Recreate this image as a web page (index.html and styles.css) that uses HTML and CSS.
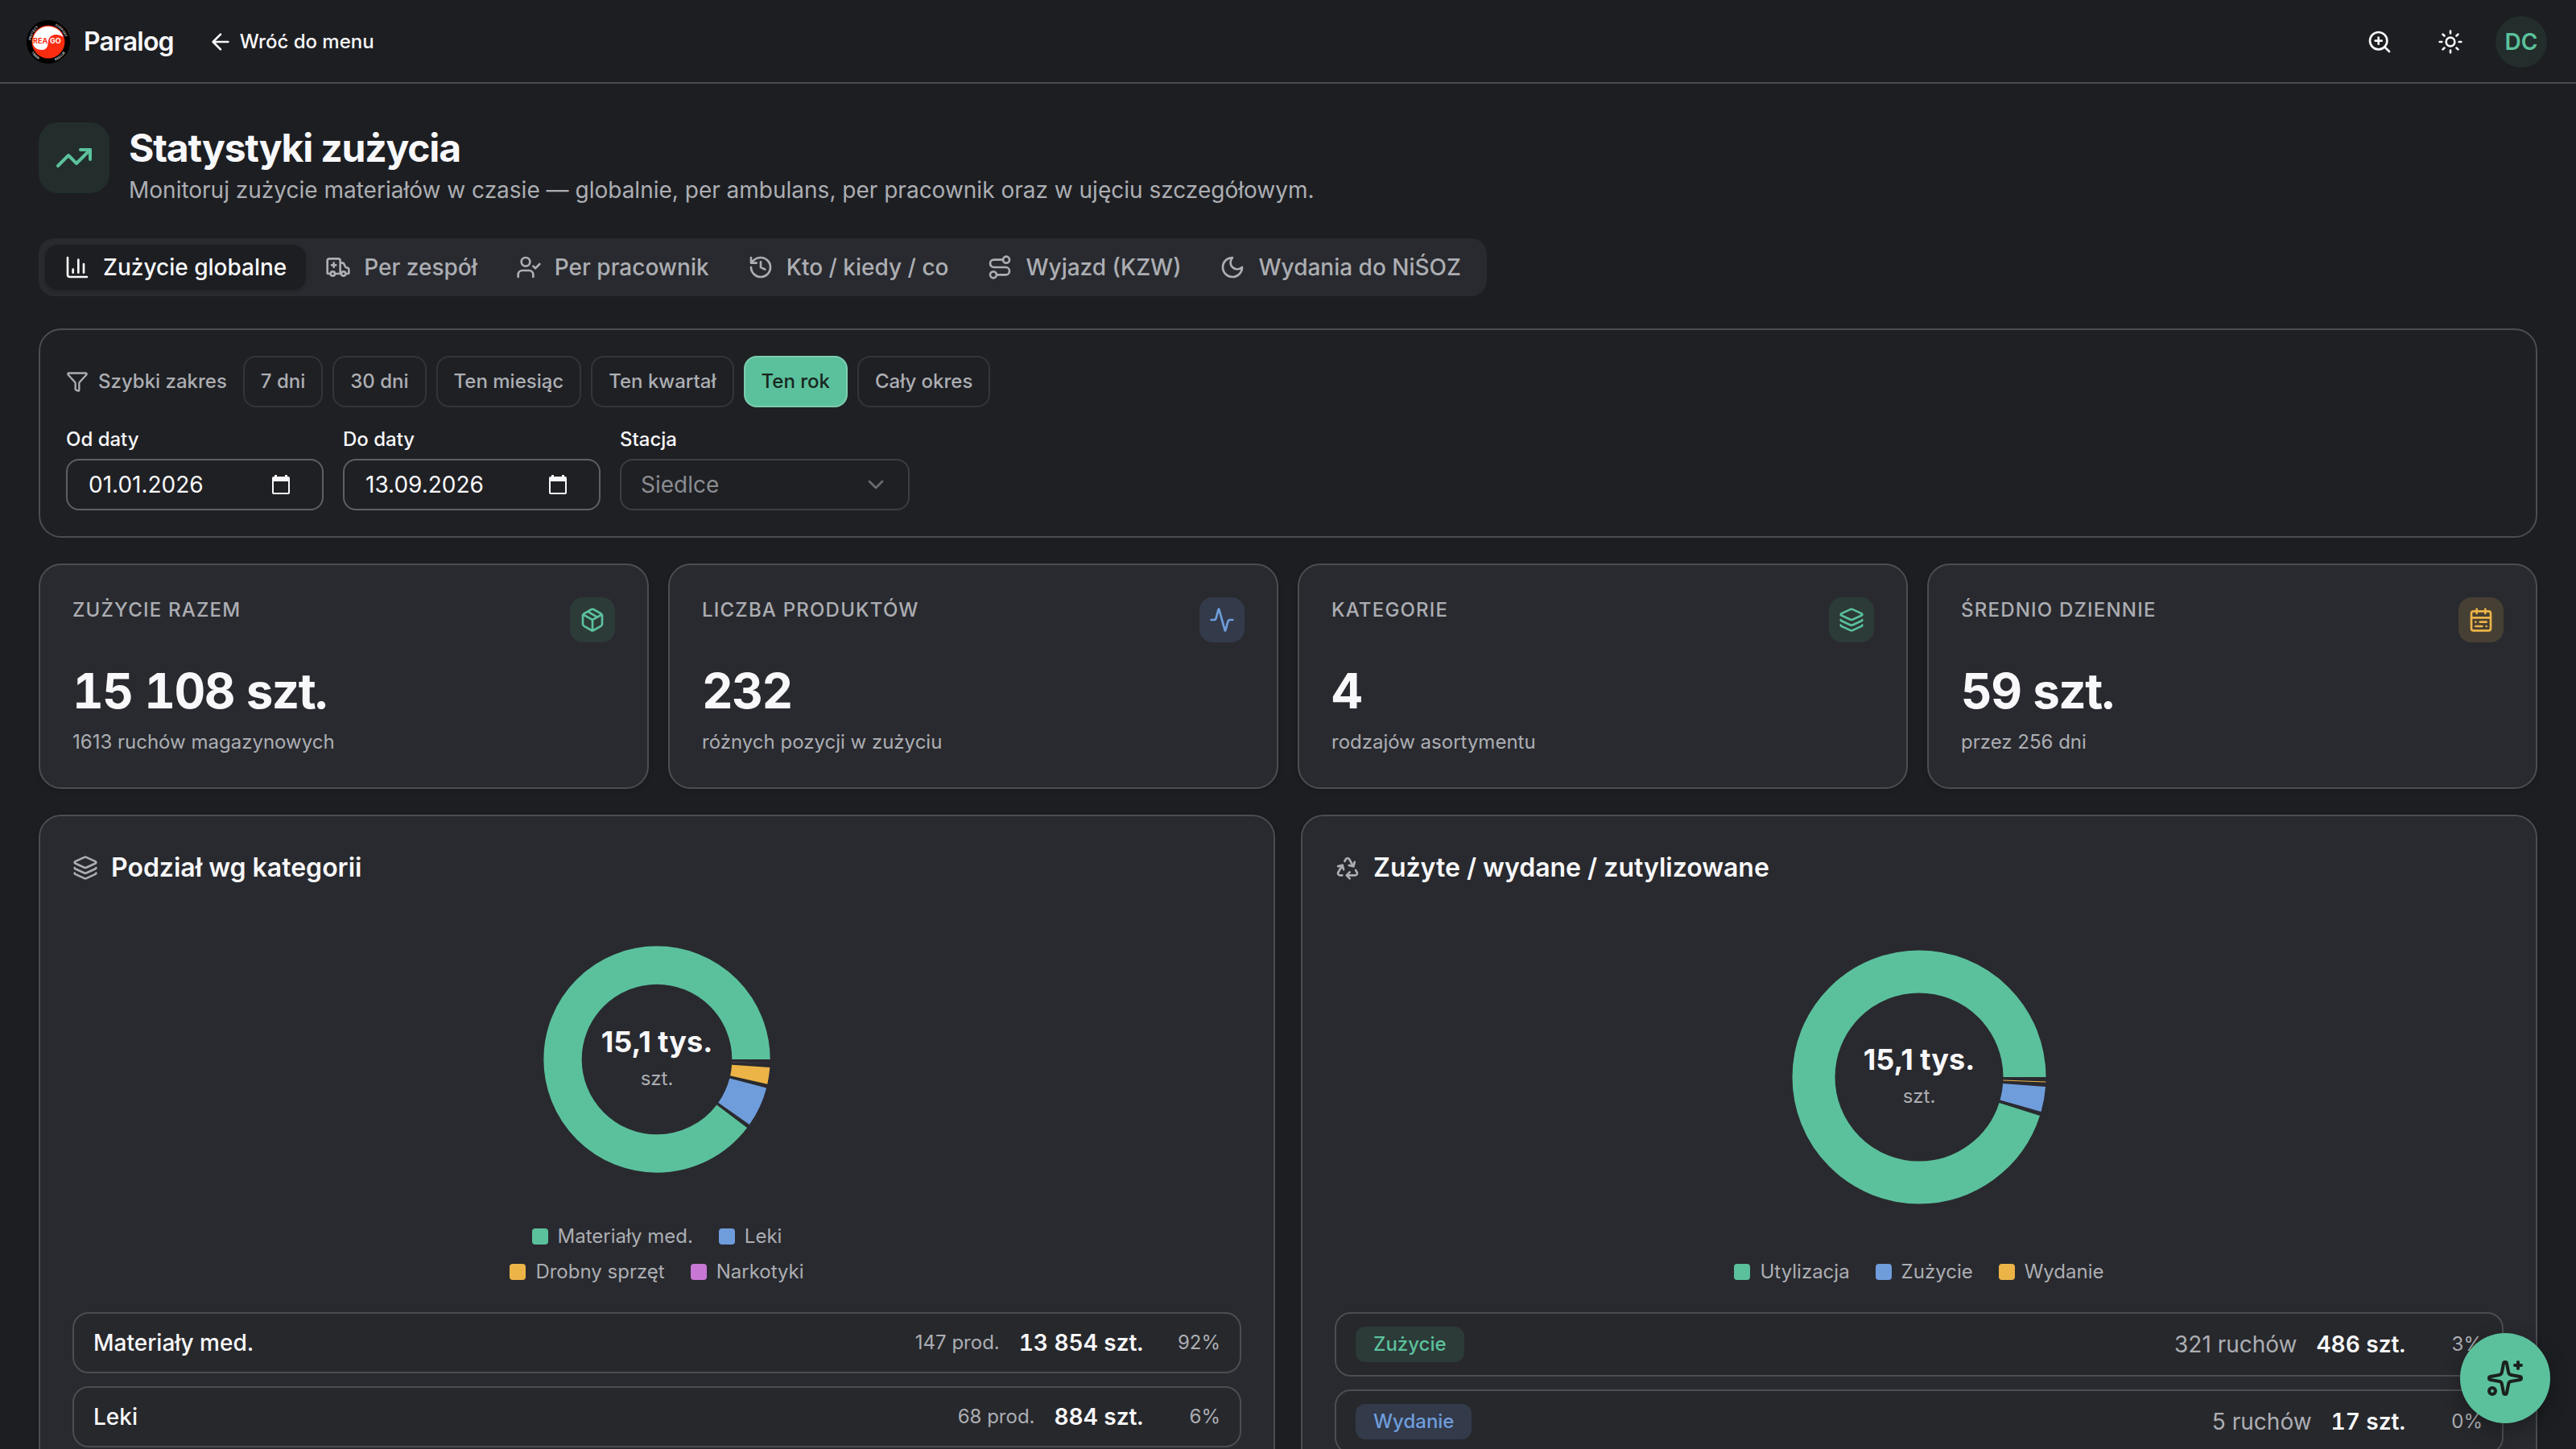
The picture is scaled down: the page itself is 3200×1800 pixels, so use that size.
FILE: index.html
```html
<!DOCTYPE html>
<html lang="pl">
<head>
<meta charset="utf-8">
<meta name="viewport" content="width=device-width, initial-scale=1">
<title>Paralog – Statystyki zużycia</title>
<link rel="stylesheet" href="styles.css">
</head>
<body>
<svg class="sprite" aria-hidden="true">
  <symbol id="i-layers" viewBox="0 0 24 24"><path d="M12.83 2.18a2 2 0 0 0-1.66 0L2.6 6.08a1 1 0 0 0 0 1.83l8.58 3.91a2 2 0 0 0 1.66 0l8.58-3.9a1 1 0 0 0 0-1.83z"/><path d="M2 12a1 1 0 0 0 .58.91l8.6 3.91a2 2 0 0 0 1.65 0l8.58-3.9A1 1 0 0 0 22 12"/><path d="M2 17a1 1 0 0 0 .58.91l8.6 3.91a2 2 0 0 0 1.65 0l8.58-3.9A1 1 0 0 0 22 17"/></symbol>
  <symbol id="i-date" viewBox="0 0 22 24"><path fill="currentColor" stroke="none" d="M3 0h3v2h10V0h3v2h1a2 2 0 0 1 2 2v18a2 2 0 0 1-2 2H2a2 2 0 0 1-2-2V4a2 2 0 0 1 2-2h1zM2 8v14h18V8z" fill-rule="evenodd"/></symbol>
</svg>
<div class="app">
  <header class="topbar">
    <a class="brand" href="#">
      <svg class="brand-logo" viewBox="0 0 56 56" aria-hidden="true">
        <defs>
          <path id="ring-top" d="M6.5 28a21.5 21.5 0 0 1 43 0"/>
          <path id="ring-bottom" d="M3 28a25 25 0 0 0 50 0"/>
        </defs>
        <circle cx="28" cy="28" r="27" fill="#000"/>
        <circle cx="28" cy="28" r="20.5" fill="#fb2c10"/>
        <path d="M8.5 28a19.5 19.5 0 0 1 38-6c-7-5-17-4-18.500 5c-.5 5-1 11-8 11c-7 0-11-4-11.500-10z" fill="#fff"/>
        <text class="logo-word" x="9" y="30" fill="#fb2c10">REA</text>
        <text class="logo-word" x="30" y="30" fill="#fff">GO</text>
        <text class="logo-ring"><textPath href="#ring-top" startOffset="2">PROTECT</textPath></text>
        <text class="logo-ring"><textPath href="#ring-top" startOffset="42">SUPPORT</textPath></text>
        <text class="logo-ring"><textPath href="#ring-bottom" startOffset="14">TRAIN</textPath></text>
        <text class="logo-ring"><textPath href="#ring-bottom" startOffset="48">RESCUE</textPath></text>
      </svg>
      <span>Paralog</span>
    </a>
    <a class="back" href="#">
      <svg class="icon" viewBox="0 0 24 24" aria-hidden="true"><path d="m12 19-7-7 7-7M19 12H5"/></svg>
      Wróć do menu
    </a>
    <div class="topbar-actions">
      <button class="icon-button" type="button" aria-label="Powiększ">
        <svg class="icon" viewBox="0 0 24 24" aria-hidden="true"><circle cx="11" cy="11" r="8"/><path d="m21 21-4.350-4.350M11 8v6M8 11h6"/></svg>
      </button>
      <button class="icon-button" type="button" aria-label="Motyw">
        <svg class="icon" viewBox="0 0 24 24" aria-hidden="true"><circle cx="12" cy="12" r="4"/><path d="M12 2v2M12 20v2M4.930 4.930l1.410 1.410M17.660 17.660l1.410 1.410M2 12h2M20 12h2M6.340 17.660l-1.410 1.410M19.070 4.930l-1.410 1.410"/></svg>
      </button>
      <button class="icon-button" type="button" aria-label="Konto"><span class="avatar">DC</span></button>
    </div>
  </header>

  <main class="page">
    <section class="hero">
      <span class="hero-icon"><svg class="icon icon-lg" viewBox="0 0 24 24" aria-hidden="true"><path d="M16 7h6v6"/><path d="m22 7-8.500 8.500-5-5L2 17"/></svg></span>
      <div>
        <h1>Statystyki zużycia</h1>
        <p>Monitoruj zużycie materiałów w czasie — globalnie, per ambulans, per pracownik oraz w ujęciu szczegółowym.</p>
      </div>
    </section>

    <div class="tabs" role="tablist">
      <button class="tab is-active" type="button" role="tab" aria-selected="true"><svg class="icon" viewBox="0 0 24 24" aria-hidden="true"><path d="M3 3v16a2 2 0 0 0 2 2h16M18 17V9M13 17V5M8 17v-3"/></svg>Zużycie globalne</button>
      <button class="tab" type="button" role="tab"><svg class="icon" viewBox="0 0 24 24" aria-hidden="true"><path d="M10 10H6M14 18V6a2 2 0 0 0-2-2H4a2 2 0 0 0-2 2v11a1 1 0 0 0 1 1h2M19 18h2a1 1 0 0 0 1-1v-3.280a1 1 0 0 0-.684-.948l-1.923-.641a1 1 0 0 1-.578-.502l-1.539-3.076A1 1 0 0 0 16.382 8H14M8 8v4M9 18h6"/><circle cx="17" cy="18" r="2"/><circle cx="7" cy="18" r="2"/></svg>Per zespół</button>
      <button class="tab" type="button" role="tab"><svg class="icon" viewBox="0 0 24 24" aria-hidden="true"><path d="m16 11 2 2 4-4M16 21v-2a4 4 0 0 0-4-4H6a4 4 0 0 0-4 4v2"/><circle cx="9" cy="7" r="4"/></svg>Per pracownik</button>
      <button class="tab" type="button" role="tab"><svg class="icon" viewBox="0 0 24 24" aria-hidden="true"><path d="M3 12a9 9 0 1 0 9-9 9.750 9.750 0 0 0-6.740 2.740L3 8M3 3v5h5M12 7v5l4 2"/></svg>Kto / kiedy / co</button>
      <button class="tab" type="button" role="tab"><svg class="icon" viewBox="0 0 24 24" aria-hidden="true"><circle cx="6" cy="19" r="3"/><path d="M9 19h8.500a3.500 3.500 0 0 0 0-7h-11a3.500 3.500 0 0 1 0-7H15"/><circle cx="18" cy="5" r="3"/></svg>Wyjazd (KZW)</button>
      <button class="tab" type="button" role="tab"><svg class="icon" viewBox="0 0 24 24" aria-hidden="true"><path d="M12 3a6 6 0 0 0 9 9 9 9 0 1 1-9-9Z"/></svg>Wydania do NiŚOZ</button>
    </div>

    <section class="filters">
      <div class="ranges">
        <span class="ranges-label"><svg class="icon icon-sm" viewBox="0 0 24 24" aria-hidden="true"><path d="M10 20a1 1 0 0 0 .553.895l2 1A1 1 0 0 0 14 21v-7a2 2 0 0 1 .517-1.341L21.740 4.670A1 1 0 0 0 21 3H3a1 1 0 0 0-.742 1.670l7.225 7.989A2 2 0 0 1 10 14z"/></svg>Szybki zakres</span>
        <button class="range" type="button">7 dni</button>
        <button class="range" type="button">30 dni</button>
        <button class="range" type="button">Ten miesiąc</button>
        <button class="range" type="button">Ten kwartał</button>
        <button class="range is-active" type="button">Ten rok</button>
        <button class="range" type="button">Cały okres</button>
      </div>
      <div class="fields">
        <div class="field">
          <label for="from">Od daty</label>
          <div class="control">
            <input id="from" type="text" value="01.01.2026">
            <button type="button" aria-label="Wybierz datę początkową"><svg class="date-icon" aria-hidden="true"><use href="#i-date"/></svg></button>
          </div>
        </div>
        <div class="field">
          <label for="to">Do daty</label>
          <div class="control">
            <input id="to" type="text" value="13.09.2026">
            <button type="button" aria-label="Wybierz datę końcową"><svg class="date-icon" aria-hidden="true"><use href="#i-date"/></svg></button>
          </div>
        </div>
        <div class="field field-wide">
          <label for="station">Stacja</label>
          <div class="picker">
            <select id="station" disabled><option>Siedlce</option></select>
            <svg class="icon" viewBox="0 0 24 24" aria-hidden="true"><path d="m6 9 6 6 6-6"/></svg>
          </div>
        </div>
      </div>
    </section>

    <section class="kpis">
      <article class="kpi">
        <div class="kpi-head"><h2>Zużycie razem</h2><span class="kpi-icon tone-green"><svg class="icon" viewBox="0 0 24 24" aria-hidden="true"><path d="M11 21.730a2 2 0 0 0 2 0l7-4A2 2 0 0 0 21 16V8a2 2 0 0 0-1-1.730l-7-4a2 2 0 0 0-2 0l-7 4A2 2 0 0 0 3 8v8a2 2 0 0 0 1 1.730zM12 22V12M3.290 7 12 12l8.710-5M7.500 4.270l9 5.150"/></svg></span></div>
        <p class="kpi-value">15 108 szt.</p>
        <p class="kpi-note">1613 ruchów magazynowych</p>
      </article>
      <article class="kpi">
        <div class="kpi-head"><h2>Liczba produktów</h2><span class="kpi-icon tone-blue"><svg class="icon" viewBox="0 0 24 24" aria-hidden="true"><path d="M22 12h-2.480a2 2 0 0 0-1.930 1.460l-2.350 8.360a.25.25 0 0 1-.48 0L9.240 2.180a.25.25 0 0 0-.48 0l-2.350 8.360A2 2 0 0 1 4.490 12H2"/></svg></span></div>
        <p class="kpi-value">232</p>
        <p class="kpi-note">różnych pozycji w zużyciu</p>
      </article>
      <article class="kpi">
        <div class="kpi-head"><h2>Kategorie</h2><span class="kpi-icon tone-green"><svg class="icon" aria-hidden="true"><use href="#i-layers"/></svg></span></div>
        <p class="kpi-value">4</p>
        <p class="kpi-note">rodzajów asortymentu</p>
      </article>
      <article class="kpi">
        <div class="kpi-head"><h2>Średnio dziennie</h2><span class="kpi-icon tone-amber"><svg class="icon" viewBox="0 0 24 24" aria-hidden="true"><rect x="3" y="4" width="18" height="18" rx="2"/><path d="M16 2v4M3 10h18M8 2v4M17 14h-6M13 18H7M7 14h.010M17 18h.010"/></svg></span></div>
        <p class="kpi-value">59 szt.</p>
        <p class="kpi-note">przez 256 dni</p>
      </article>
    </section>

    <section class="panels">
      <article class="panel">
        <h2><svg class="icon" aria-hidden="true"><use href="#i-layers"/></svg>Podział wg kategorii</h2>
        <div class="chart">
          <div class="plot">
            <svg class="donut" viewBox="0 0 412 412" role="img" aria-label="Podział zużycia wg kategorii">
              <circle class="stroke-green" pathLength="360" cx="206" cy="206" r="131" stroke-dasharray="322.800 37.200" stroke-dashoffset="-37.200"/>
              <circle class="stroke-blue" pathLength="360" cx="206" cy="206" r="131" stroke-dasharray="20.600 339.400" stroke-dashoffset="-14.600"/>
              <circle class="stroke-amber" pathLength="360" cx="206" cy="206" r="131" stroke-dasharray="8.500 351.500" stroke-dashoffset="-4.100"/>
              <circle class="stroke-violet" pathLength="360" cx="206" cy="206" r="131" stroke-dasharray=".1 359.900" stroke-dashoffset="-2"/>
            </svg>
            <p class="total"><strong>15,1 tys.</strong><span>szt.</span></p>
          </div>
          <ul class="legend legend-narrow">
            <li><i class="fill-green"></i>Materiały med.</li>
            <li><i class="fill-blue"></i>Leki</li>
            <li><i class="fill-amber"></i>Drobny sprzęt</li>
            <li><i class="fill-violet"></i>Narkotyki</li>
          </ul>
        </div>
        <ul class="rows">
          <li><span class="name">Materiały med.</span><span class="count">147 prod.</span><strong>13 854 szt.</strong><span class="share">92%</span></li>
          <li><span class="name">Leki</span><span class="count">68 prod.</span><strong>884 szt.</strong><span class="share">6%</span></li>
        </ul>
      </article>

      <article class="panel">
        <h2><svg class="icon" viewBox="0 0 24 24" aria-hidden="true"><path d="M7 19H4.815a1.830 1.830 0 0 1-1.570-.881 1.785 1.785 0 0 1-.004-1.784L7.196 9.500M11 19h8.203a1.830 1.830 0 0 0 1.556-.89 1.784 1.784 0 0 0 0-1.775l-1.226-2.120M14 16l-3 3 3 3M8.293 13.596 7.196 9.500 3.100 10.598M9.344 5.811l1.093-1.892A1.830 1.830 0 0 1 11.985 3a1.784 1.784 0 0 1 1.546.888l3.943 6.843M13.378 9.633l4.096 1.098 1.097-4.096"/></svg>Zużyte / wydane / zutylizowane</h2>
        <div class="chart">
          <div class="plot">
            <svg class="donut" viewBox="0 0 412 412" role="img" aria-label="Zużyte, wydane i zutylizowane">
              <circle class="stroke-green" pathLength="360" cx="206" cy="206" r="131" stroke-dasharray="342.200 17.800" stroke-dashoffset="-17.800"/>
              <circle class="stroke-blue" pathLength="360" cx="206" cy="206" r="131" stroke-dasharray="11.400 348.600" stroke-dashoffset="-4.400"/>
              <circle class="stroke-amber" pathLength="360" cx="206" cy="206" r="131" stroke-dasharray=".4 359.600" stroke-dashoffset="-2"/>
            </svg>
            <p class="total"><strong>15,1 tys.</strong><span>szt.</span></p>
          </div>
          <ul class="legend">
            <li><i class="fill-green"></i>Utylizacja</li>
            <li><i class="fill-blue"></i>Zużycie</li>
            <li><i class="fill-amber"></i>Wydanie</li>
          </ul>
        </div>
        <ul class="rows rows-badged">
          <li><span class="name"><span class="badge tone-green">Zużycie</span></span><span class="count">321 ruchów</span><strong>486 szt.</strong><span class="share">3%</span></li>
          <li><span class="name"><span class="badge tone-blue">Wydanie</span></span><span class="count">5 ruchów</span><strong>17 szt.</strong><span class="share">0%</span></li>
        </ul>
      </article>
    </section>
  </main>

  <button class="assistant" type="button" aria-label="Asystent">
    <svg class="icon icon-lg" viewBox="0 0 24 24" aria-hidden="true"><path d="M11.017 2.814a1 1 0 0 1 1.966 0l1.051 5.558a2 2 0 0 0 1.594 1.594l5.558 1.051a1 1 0 0 1 0 1.966l-5.558 1.051a2 2 0 0 0-1.594 1.594l-1.051 5.558a1 1 0 0 1-1.966 0l-1.051-5.558a2 2 0 0 0-1.594-1.594l-5.558-1.051a1 1 0 0 1 0-1.966l5.558-1.051a2 2 0 0 0 1.594-1.594zM20 2v4M22 4h-4"/><circle cx="4" cy="20" r="2"/></svg>
  </button>
</div>
</body>
</html>
```
FILE: styles.css
```css
:root {
  --bg: #1d1e22;
  --surface: #292a2f;
  --surface-row: #27282c;
  --surface-filter: #1f2024;
  --line: #4b4d52;
  --line-soft: #333539;
  --text: #f8f8fa;
  --muted: #acaeb3;
  --green: #5bc19c;
  --blue: #6f9ddc;
  --amber: #ecb447;
  --violet: #c678d4;
}

* { box-sizing: border-box; }

body {
  margin: 0;
  background: var(--bg);
  color: var(--text);
  font-family: Inter, "Liberation Sans", sans-serif;
  font-size: 28px;
  line-height: 40px;
}

h1, h2, p, ul { margin: 0; padding: 0; }
ul { list-style: none; }
a { color: inherit; text-decoration: none; }
button, input, select { font: inherit; color: inherit; margin: 0; }
button { cursor: pointer; }

.sprite { display: none; }

.app {
  height: 100vh;
  overflow: hidden auto;
  scrollbar-width: none;
}

.icon {
  width: 32px;
  height: 32px;
  flex: none;
  fill: none;
  stroke: currentColor;
  stroke-width: 2;
  stroke-linecap: round;
  stroke-linejoin: round;
}
.icon-sm { width: 28px; height: 28px; }
.icon-lg { width: 48px; height: 48px; }

/* Top bar */
.topbar {
  display: flex;
  align-items: center;
  height: 104px;
  padding: 0 32px;
  box-shadow: inset 0 -2px var(--line);
}
.brand {
  display: flex;
  align-items: center;
  gap: 16px;
  font-size: 32px;
  font-weight: 600;
  letter-spacing: -0.025em;
}
.brand-logo { width: 56px; height: 56px; }
.logo-word { font-size: 9px; font-weight: 700; letter-spacing: 0; }
.logo-ring { font-size: 4px; font-weight: 600; letter-spacing: 0; fill: #ddd; }
.back {
  display: flex;
  align-items: center;
  gap: 8px;
  margin-left: 42px;
  font-size: 24px;
  font-weight: 500;
}
.topbar-actions { display: flex; gap: 16px; margin-left: auto; }
.icon-button {
  display: grid;
  place-items: center;
  width: 72px;
  height: 72px;
  padding: 0;
  border: 0;
  background: none;
}
.avatar {
  display: grid;
  place-items: center;
  width: 64px;
  height: 64px;
  border-radius: 50%;
  background: #222d2c;
  color: var(--green);
  font-weight: 600;
}

/* Page */
.page { padding: 48px; }

.hero { display: flex; align-items: flex-start; gap: 24px; }
.hero-icon {
  display: grid;
  place-items: center;
  width: 88px;
  height: 88px;
  border-radius: 24px;
  background: #222d2c;
  color: var(--green);
}
.hero h1 {
  font-size: 48px;
  line-height: 64px;
  font-weight: 700;
  letter-spacing: -0.025em;
}
.hero p { color: var(--muted); }

.tabs {
  display: flex;
  width: fit-content;
  margin-top: 40px;
  padding: 8px;
  border-radius: 20px;
  background: var(--surface);
}
.tab {
  display: flex;
  align-items: center;
  gap: 16px;
  height: 56px;
  padding: 0 24px;
  border: 0;
  border-radius: 16px;
  background: none;
  color: var(--muted);
  font-weight: 500;
}
.tab.is-active {
  background: var(--bg);
  color: var(--text);
  box-shadow: 0 2px 4px rgb(0 0 0 / 0.2);
}

/* Filters */
.filters {
  display: grid;
  gap: 24px;
  margin-top: 40px;
  padding: 32px;
  border: 2px solid var(--line);
  border-radius: 28px;
  background: var(--surface-filter);
}
.ranges { display: flex; align-items: center; gap: 12px; font-size: 24px; }
.ranges-label {
  display: flex;
  align-items: center;
  gap: 12px;
  margin-right: 8px;
  color: var(--muted);
  font-weight: 500;
}
.range {
  height: 64px;
  padding: 0 20px;
  border: 2px solid var(--line-soft);
  border-radius: 16px;
  background: none;
  color: var(--muted);
  font-weight: 500;
}
.range.is-active {
  border-color: #7ccdb0;
  background: var(--green);
  color: #18261f;
}
.fields { display: flex; gap: 24px; }
.field {
  display: grid;
  grid-template-columns: minmax(0, 1fr);
  gap: 8px;
  width: 320px;
}
.field-wide { width: 360px; }
.field label { font-size: 24px; line-height: 32px; font-weight: 500; }
.control {
  display: flex;
  align-items: center;
  height: 64px;
  padding: 0 24px;
  border: 2px solid #5b6165;
  border-radius: 16px;
}
.control input {
  flex: 1;
  min-width: 0;
  padding: 0 2px;
  border: 0;
  background: none;
  outline: 0;
}
.control button {
  display: grid;
  place-items: center;
  width: 54px;
  padding: 0;
  border: 0;
  background: none;
}
.date-icon { width: 22px; height: 24px; }
.picker {
  display: grid;
  align-items: center;
  height: 64px;
  border: 2px solid #3c3e42;
  border-radius: 16px;
  color: #8a8c90;
}
.picker select, .picker .icon { grid-area: 1 / 1; }
.picker select {
  appearance: none;
  width: 100%;
  height: 60px;
  padding: 0 24px;
  border: 0;
  background: none;
  opacity: 1;
}
.picker .icon { justify-self: end; margin-right: 24px; opacity: 0.7; pointer-events: none; }

/* Summary cards */
.kpis {
  display: grid;
  grid-template-columns: repeat(4, 1fr);
  gap: 24px;
  margin-top: 32px;
}
.kpi, .panel {
  padding: 40px;
  border: 2px solid var(--line);
  border-radius: 28px;
  background: var(--surface);
  box-shadow: 0 2px 6px rgb(0 0 0 / 0.15);
}
.kpi-head { display: flex; justify-content: space-between; }
.kpi h2 {
  color: var(--muted);
  font-size: 24px;
  line-height: 32px;
  font-weight: 500;
  letter-spacing: 0.05em;
  text-transform: uppercase;
}
.kpi-icon {
  display: grid;
  place-items: center;
  width: 56px;
  height: 56px;
  border-radius: 16px;
}
.kpi-value {
  margin-top: 24px;
  font-size: 60px;
  line-height: 72px;
  font-weight: 700;
  font-variant-numeric: tabular-nums;
  letter-spacing: -0.025em;
}
.kpi-note {
  margin-top: 12px;
  color: var(--muted);
  font-size: 24px;
  line-height: 32px;
}
.tone-green { background: #2c3a38; color: var(--green); }
.tone-blue { background: #333a4a; color: var(--blue); }
.tone-amber { background: #463f33; color: var(--amber); }

/* Chart panels */
.panels {
  display: grid;
  grid-template-columns: repeat(2, 1fr);
  gap: 32px;
  margin-top: 32px;
}
.panel h2 {
  display: flex;
  align-items: center;
  gap: 16px;
  font-size: 32px;
  line-height: 48px;
  font-weight: 600;
}
.panel h2 .icon { color: var(--muted); }
.chart {
  display: flex;
  flex-direction: column;
  gap: 20px;
  height: 464px;
  margin-top: 30px;
}
.plot {
  flex: 1;
  min-height: 0;
  display: grid;
  grid-template-rows: 100%;
  place-items: center;
}
.donut, .total { grid-area: 1 / 1; }
.donut { height: 100%; fill: none; stroke-width: 53; }
.total {
  display: grid;
  gap: 12px;
  text-align: center;
  color: var(--muted);
  font-size: 24px;
  line-height: 32px;
}
.total strong { color: var(--text); font-size: 36px; line-height: 36px; font-weight: 700; }

.stroke-green { stroke: var(--green); }
.stroke-blue { stroke: var(--blue); }
.stroke-amber { stroke: var(--amber); }
.stroke-violet { stroke: var(--violet); }
.fill-green { background: var(--green); }
.fill-blue { background: var(--blue); }
.fill-amber { background: var(--amber); }
.fill-violet { background: var(--violet); }

.legend {
  display: flex;
  flex-wrap: wrap;
  justify-content: center;
  gap: 12px 32px;
  align-self: center;
  color: var(--muted);
  font-size: 24px;
  line-height: 32px;
}
.legend-narrow { max-width: 440px; }
.legend li { display: flex; align-items: center; gap: 12px; }
.legend i { width: 20px; height: 20px; border-radius: 4px; }

.rows { display: grid; gap: 16px; margin-top: 34px; }
.rows li {
  display: flex;
  align-items: center;
  gap: 24px;
  min-height: 76px;
  padding: 0 24px;
  border: 2px solid var(--line);
  border-radius: 20px;
  background: var(--surface-row);
}
.rows .name { flex: 1; font-weight: 500; }
.rows .count, .rows .share { color: var(--muted); font-size: 24px; }
.rows strong { font-weight: 600; font-variant-numeric: tabular-nums; }
.rows .share { width: 72px; text-align: right; }
.rows-badged li { min-height: 80px; }
.rows-badged .count { font-size: 28px; }
.badge {
  display: inline-flex;
  align-items: center;
  height: 44px;
  padding: 0 22px;
  border-radius: 12px;
  font-size: 24px;
  vertical-align: middle;
}

.assistant {
  position: fixed;
  right: 32px;
  bottom: 32px;
  display: grid;
  place-items: center;
  width: 112px;
  height: 112px;
  padding: 0;
  border: 0;
  border-radius: 50%;
  background: var(--green);
  color: #1b211f;
  box-shadow: 0 8px 24px rgb(0 0 0 / 0.3);
}
```
